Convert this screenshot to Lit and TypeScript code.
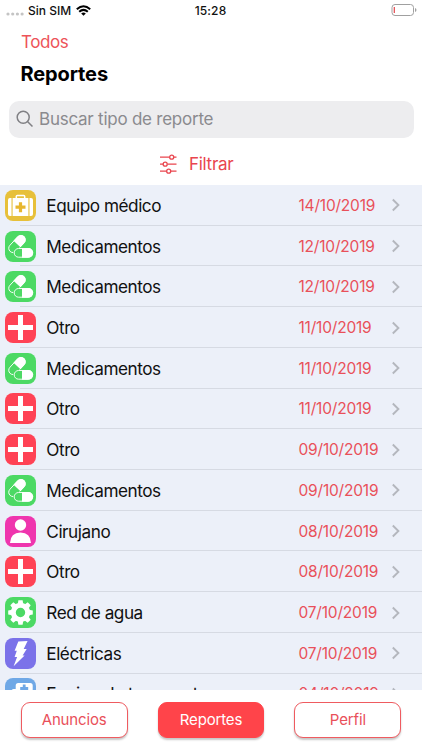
import { LitElement, html, css, svg } from "lit";
import { customElement, property } from "lit/decorators.js";

type Kind = "kit" | "pills" | "cross" | "person" | "gear" | "bolt" | "transport";

interface Report {
  kind: Kind;
  label: string;
  date: string;
}

const reports: Report[] = [
  { kind: "kit", label: "Equipo médico", date: "14/10/2019" },
  { kind: "pills", label: "Medicamentos", date: "12/10/2019" },
  { kind: "pills", label: "Medicamentos", date: "12/10/2019" },
  { kind: "cross", label: "Otro", date: "11/10/2019" },
  { kind: "pills", label: "Medicamentos", date: "11/10/2019" },
  { kind: "cross", label: "Otro", date: "11/10/2019" },
  { kind: "cross", label: "Otro", date: "09/10/2019" },
  { kind: "pills", label: "Medicamentos", date: "09/10/2019" },
  { kind: "person", label: "Cirujano", date: "08/10/2019" },
  { kind: "cross", label: "Otro", date: "08/10/2019" },
  { kind: "gear", label: "Red de agua", date: "07/10/2019" },
  { kind: "bolt", label: "Eléctricas", date: "07/10/2019" },
  { kind: "transport", label: "Equipo de transporte", date: "04/10/2019" },
];

const colors: Record<Kind, string> = {
  kit: "#e7c03a",
  pills: "#4cd964",
  cross: "#ff4255",
  person: "#ef35ae",
  gear: "#4cd964",
  bolt: "#7b72e9",
  transport: "#6fa8e6",
};

const glyphs: Record<Kind, unknown> = {
  kit: svg`
    <path d="M11.300 8.500V6.600q0-1 1-1h6.400q1 0 1 1v1.900" fill="none" stroke="#fff" stroke-width="1.500"/>
    <rect x="7.600" y="8" width="15.800" height="18" fill="#fff"/>
    <path d="M6.500 8v18H5q-2-.1-2-2V10q0-2 2-2zM24.500 8v18H26q2-.1 2-2V10q0-2-2-2z" fill="#fff"/>
    <path d="M15.500 12.200v10M10.500 17.200h10" stroke="#e7b62e" stroke-width="3.200"/>`,
  pills: svg`
    <g transform="rotate(-47 12 13)">
      <rect x="1.900" y="8.700" width="20.200" height="8.600" rx="4.300" fill="none" stroke="#fff" stroke-width=".9"/>
      <path d="M12 8.200h5.700a4.800 4.800 0 0 1 0 9.600H12z" fill="#fff"/>
    </g>
    <rect x="8.200" y="16.400" width="20.600" height="10.800" rx="5.400" fill="#4cd964"/>
    <rect x="9.200" y="17.500" width="18.500" height="8.700" rx="4.350" fill="none" stroke="#fff" stroke-width=".9"/>
    <path d="M17 17h6.300a4.800 4.800 0 0 1 0 9.700H17z" fill="#fff"/>`,
  cross: svg`<path d="M15.500 3v25M3 15.500h25" stroke="#fff" stroke-width="5"/>`,
  person: svg`
    <circle cx="15.500" cy="9" r="5.700" fill="#fff"/>
    <path d="M5 27q.5-10.500 10.500-10.500T26 27z" fill="#fff"/>`,
  gear: svg`
    <g fill="#fff">
      ${[0, 45, 90, 135, 180, 225, 270, 315].map(
        (a) => svg`<path transform=${`rotate(${a} 15.5 15.5)`} d="M12.500 8.500l.9-5.300h4.200l.9 5.300z"/>`
      )}
    </g>
    <circle cx="15.500" cy="15.500" r="7.200" fill="none" stroke="#fff" stroke-width="5"/>`,
  bolt: svg`<path d="M13.300 3.500l9.300-.4-3.900 8h3l-4.100 6.400h2L8.600 28.200l3.500-9.300H9.600l2.200-6.200H9.600z" fill="#fff"/>`,
  transport: svg`
    <path d="M10.700 19V7.500q0-2.500 2.500-2.500h12q2.500 0 2.500 2.500V26h-24v-9l3-5q.8-1 2-1h2z" fill="#fff"/>
    <path d="M19.200 6.500v8M15.200 10.500h8" stroke="#6fa8e6" stroke-width="2.800"/>`,
};

@customElement("report-row")
class ReportRow extends LitElement {
  @property({ attribute: false }) report!: Report;

  static styles = css`
    :host {
      display: flex;
      align-items: center;
      box-sizing: border-box;
      flex: 0 0 40.720px;
      height: 40.720px;
      padding: 0 22px 0 5.300px;
      background: linear-gradient(#d6dae3, #d6dae3) 20px 100% / 100% 1px no-repeat;
    }
    .icon {
      flex: none;
      width: 31px;
      height: 31px;
    }
    .label {
      flex: 1;
      padding-left: 10px;
      font-size: 17.200px;
      letter-spacing: -0.460px;
      color: #111;
      white-space: nowrap;
    }
    .date {
      width: 92.500px;
      font-size: 15.500px;
      letter-spacing: -0.200px;
      color: #e9505a;
      white-space: nowrap;
    }
    .chevron {
      flex: none;
      width: 9px;
      height: 14px;
    }
  `;

  render() {
    const { kind, label, date } = this.report;
    return html`
      <svg class="icon" viewBox="0 0 31 31">
        <rect width="31" height="31" rx="8" fill=${colors[kind]} />
        ${glyphs[kind]}
      </svg>
      <span class="label">${label}</span>
      <span class="date">${date}</span>
      <svg class="chevron" viewBox="0 0 9 14">
        <path d="M1.800 1.500L7.400 7l-5.600 5.500" fill="none" stroke="#b4b7be" stroke-width="1.900" />
      </svg>
    `;
  }
}

@customElement("app-root")
class AppRoot extends LitElement {
  static styles = css`
    :host {
      display: flex;
      flex-direction: column;
      width: 422px;
      height: 750px;
      overflow: hidden;
      background: #fff;
      font-family: Inter, "Liberation Sans", sans-serif;
    }
    .status {
      display: grid;
      grid-template-columns: 1fr auto 1fr;
      align-items: center;
      height: 20px;
      padding: 0 5px 0 6px;
      font-size: 12px;
      font-weight: 500;
      color: #111;
    }
    .time {
      margin-right: 2px;
      letter-spacing: 0.150px;
    }
    .carrier {
      display: flex;
      align-items: center;
    }
    .dots {
      width: 18px;
      height: 4px;
      margin: 7px 4px 0 0;
    }
    .wifi {
      width: 15px;
      height: 11px;
      margin-left: 5px;
    }
    .battery {
      justify-self: end;
      width: 26px;
      height: 12px;
    }
    .back {
      height: 42px;
      box-sizing: border-box;
      padding: 10.500px 21px 0;
      font-size: 17px;
      line-height: 22px;
      letter-spacing: -0.400px;
      color: #ed5359;
    }
    .title {
      height: 39px;
      margin: 0;
      padding-left: 20.500px;
      font-size: 20px;
      line-height: 25px;
      letter-spacing: -0.120px;
      font-weight: 700;
      color: #000;
    }
    .search {
      display: flex;
      align-items: center;
      gap: 5px;
      height: 36.500px;
      margin: 0 8.500px 0.500px;
      padding-left: 7.500px;
      box-sizing: border-box;
      border-radius: 10px;
      background: #ededef;
      color: #8a8a8e;
      font-size: 17px;
      letter-spacing: -0.240px;
    }
    .lens {
      width: 18px;
      height: 18px;
    }
    .filter {
      display: flex;
      align-items: center;
      gap: 12px;
      height: 47px;
      padding: 5px 0 0 160px;
      box-sizing: border-box;
      font-size: 17px;
      letter-spacing: -0.300px;
      color: #e9454e;
    }
    .sliders {
      width: 17px;
      height: 20px;
    }
    .list {
      display: flex;
      flex-direction: column;
      height: 504.500px;
      flex: none;
      overflow: hidden;
      background: #ecf0f9;
    }
    .tabs {
      display: flex;
      gap: 30px;
      padding: 12.500px 20.700px 0;
    }
    .tab {
      display: flex;
      align-items: center;
      justify-content: center;
      box-sizing: border-box;
      width: 107px;
      height: 35.500px;
      border: 1px solid #ef5b60;
      border-radius: 9px;
      background: #fff;
      box-shadow: 0 2px 2px #00000038;
      font-size: 15px;
      letter-spacing: -0.150px;
      color: #e9505a;
    }
    .selected {
      background: #ff444a;
      border-color: #ff444a;
      color: #fff;
    }
  `;

  render() {
    return html`
      <div class="status">
        <div class="carrier">
          <svg class="dots" viewBox="0 0 18 4" fill="#c4c4c4">
            <circle cx="2" cy="2" r="1.600" /><circle cx="6.700" cy="2" r="1.600" />
            <circle cx="11.400" cy="2" r="1.600" /><circle cx="16.100" cy="2" r="1.600" />
          </svg>
          <span>Sin SIM</span>
          <svg class="wifi" viewBox="0 0 15 11" fill="none" stroke="#000" stroke-width="2">
            <path d="M.8 4.200q6.700-6 13.400 0M3.200 6.800q4.300-3.800 8.600 0" />
            <path d="M7.500 10.800L5.200 8.500q2.300-1.800 4.600 0z" fill="#000" stroke="none" />
          </svg>
        </div>
        <span class="time">15:28</span>
        <svg class="battery" viewBox="0 0 26 12">
          <rect x="1" y=".5" width="21.500" height="11" rx="3" fill="none" stroke="#a0a0a0" />
          <path d="M24 4q1.500 .6 1.500 2t-1.500 2z" fill="#a0a0a0" />
          <rect x="2.700" y="3" width="1.200" height="6" fill="#e5484d" />
        </svg>
      </div>
      <div class="back">Todos</div>
      <h1 class="title">Reportes</h1>
      <div class="search">
        <svg class="lens" viewBox="0 0 18 18" fill="none" stroke="#808084" stroke-width="1.500">
          <circle cx="7.200" cy="7.200" r="6" /><path d="M11.500 11.500l5 5" />
        </svg>
        <span>Buscar tipo de reporte</span>
      </div>
      <div class="filter">
        <svg class="sliders" viewBox="0 0 17 20" fill="none" stroke="#e9454e" stroke-width="1.300">
          <path d="M0 3.200h9.500M14 3.200h2.500M0 10.200h3M7.500 10.200h9M0 17.200h6.500M11 17.200h5.500" />
          <circle cx="11.700" cy="3.200" r="2" /><circle cx="5.200" cy="10.200" r="2" />
          <circle cx="8.700" cy="17.200" r="2" />
        </svg>
        <span>Filtrar</span>
      </div>
      <div class="list">
        ${reports.map((r) => html`<report-row .report=${r}></report-row>`)}
      </div>
      <nav class="tabs">
        <div class="tab">Anuncios</div>
        <div class="tab selected">Reportes</div>
        <div class="tab">Perfil</div>
      </nav>
    `;
  }
}
